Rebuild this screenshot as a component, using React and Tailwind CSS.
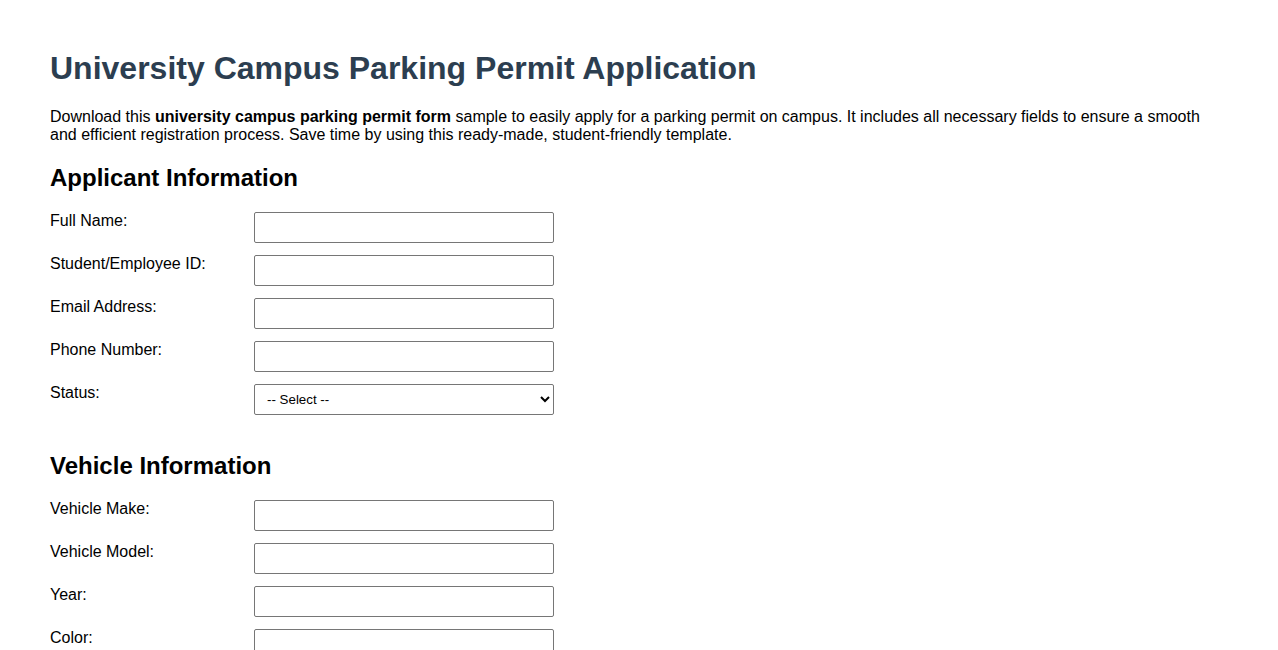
export default function App() {
  const applicant = [
    "Full Name:",
    "Student/Employee ID:",
    "Email Address:",
    "Phone Number:",
  ];
  const vehicle = ["Vehicle Make:", "Vehicle Model:", "Year:", "Color:"];

  return (
    <div
      className="min-h-screen bg-white px-[50px] pt-[50px] pb-10 text-black"
      style={{ fontFamily: '"Liberation Sans", Arial, sans-serif' }}
    >
      <h1 className="text-[32px] font-bold leading-[37px] text-[#2c3e50] mb-[21px]">
        University Campus Parking Permit Application
      </h1>
      <p className="text-[16px] leading-[18px] max-w-[1160px] mb-[20px]">
        Download this <strong>university campus parking permit form</strong>{" "}
        sample to easily apply for a parking permit on campus. It includes all
        necessary fields to ensure a smooth and efficient registration process.
        Save time by using this ready-made, student-friendly template.
      </p>

      {/* Applicant */}
      <h2 className="text-[24px] font-bold leading-[28px] mb-[20px]">
        Applicant Information
      </h2>
      {applicant.map((label) => (
        <div key={label} className="flex mb-3">
          <label className="w-[204px] text-[16px] leading-[18px]">
            {label}
          </label>
          <input
            type="text"
            className="w-[300px] h-[31px] border border-[#767676] rounded-[2px] px-2 text-[13px]"
          />
        </div>
      ))}
      <div className="flex mb-[37px]">
        <label className="w-[204px] text-[16px] leading-[18px]">Status:</label>
        <select className="w-[300px] h-[31px] border border-[#767676] rounded-[2px] pl-2 text-[13.33px] bg-white">
          <option>-- Select --</option>
          <option>Student</option>
          <option>Faculty</option>
          <option>Staff</option>
        </select>
      </div>

      {/* Vehicle */}
      <h2 className="text-[24px] font-bold leading-[28px] mb-[20px]">
        Vehicle Information
      </h2>
      {vehicle.map((label) => (
        <div key={label} className="flex mb-3">
          <label className="w-[204px] text-[16px] leading-[18px]">
            {label}
          </label>
          <input
            type="text"
            className="w-[300px] h-[31px] border border-[#767676] rounded-[2px] px-2 text-[13px]"
          />
        </div>
      ))}
    </div>
  );
}
